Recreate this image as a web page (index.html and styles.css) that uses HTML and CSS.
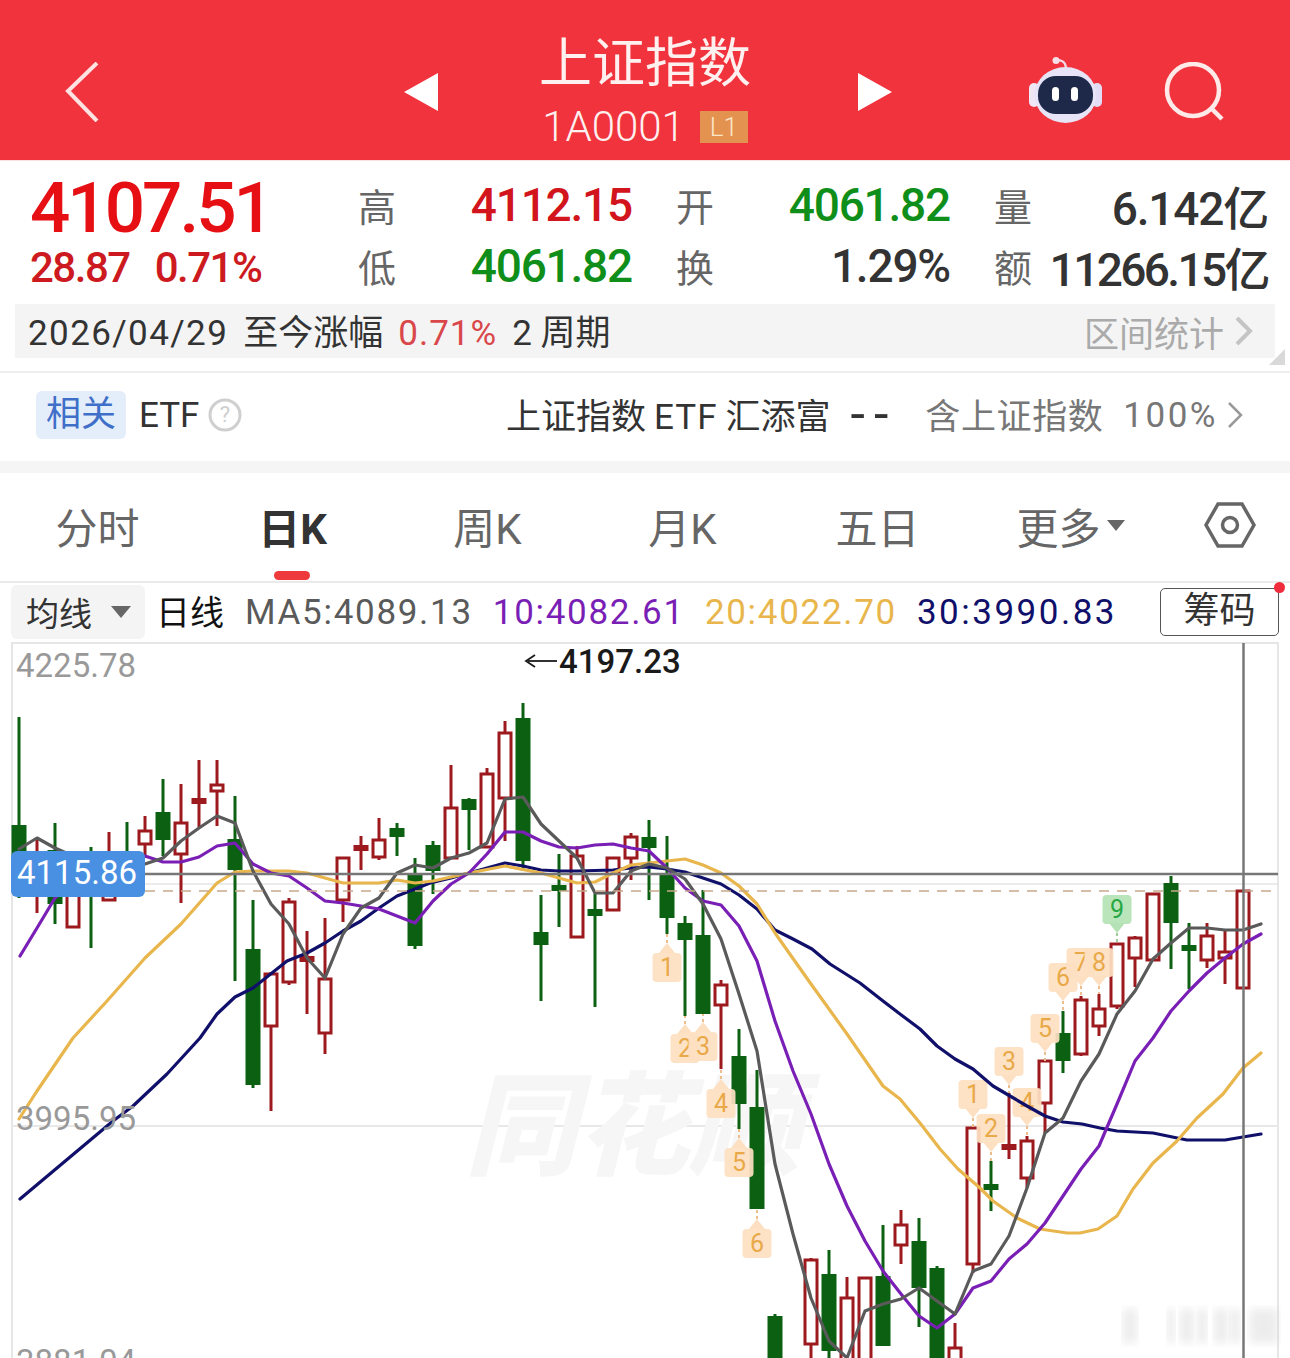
FILE: index.html
```html
<!DOCTYPE html>
<html lang="zh-CN">
<head>
    <meta charset="UTF-8">
    <meta name="viewport" content="width=device-width, initial-scale=1.0">
    <title>上证指数</title>
    <link rel="stylesheet" href="styles.css">
</head>
<body>
    <header class="topbar">
        <svg class="back-icon" width="34" height="60" viewBox="0 0 34 60"><polyline points="32,1 3,29 32,59" fill="none" stroke="#ffe3e3" stroke-width="4"/></svg>
        <svg class="prev-icon" width="34" height="38" viewBox="0 0 34 38"><polygon points="34,0 0,19 34,38" fill="#fff"/></svg>
        <div class="title-block">
            <div class="title">上证指数</div>
            <div class="subtitle"><span>1A0001</span><span class="level">L1</span></div>
        </div>
        <svg class="next-icon" width="34" height="38" viewBox="0 0 34 38"><polygon points="0,0 34,19 0,38" fill="#fff"/></svg>
        <svg class="robot-icon" width="74" height="66" viewBox="0 0 74 66">
            <path d="M37 10 C36 4 32 3 27 3" fill="none" stroke="#f3d9e6" stroke-width="2.5"/>
            <circle cx="27" cy="3.5" r="3.5" fill="#f7dfe9"/>
            <rect x="0" y="26" width="10" height="24" rx="5" fill="#efe6f6"/>
            <rect x="63" y="26" width="10" height="24" rx="5" fill="#e3dcf5"/>
            <ellipse cx="36.500" cy="38" rx="31" ry="28" fill="#e8e4f8"/>
            <rect x="9" y="19" width="55" height="38" rx="18" fill="#1e294a"/>
            <rect x="23" y="30" width="7" height="14" rx="3.500" fill="#fff"/>
            <rect x="42" y="30" width="7" height="14" rx="3.500" fill="#fff"/>
        </svg>
        <svg class="search-icon" width="62" height="62" viewBox="0 0 62 62"><circle cx="29" cy="28" r="26" fill="none" stroke="#ffeaea" stroke-width="4.500"/><line x1="48" y1="47" x2="58" y2="57" stroke="#ffeaea" stroke-width="4.500"/></svg>
    </header>

    <section class="quote">
        <div class="quote-main">
            <div class="price">4107.51</div>
            <div class="change"><span>28.87</span><span>0.71%</span></div>
        </div>
        <div class="stats">
            <div class="stat"><span class="stat-name">高</span><span class="stat-value up">4112.15</span></div>
            <div class="stat"><span class="stat-name">开</span><span class="stat-value down">4061.82</span></div>
            <div class="stat"><span class="stat-name">量</span><span class="stat-value">6.142亿</span></div>
            <div class="stat"><span class="stat-name">低</span><span class="stat-value down">4061.82</span></div>
            <div class="stat"><span class="stat-name">换</span><span class="stat-value">1.29%</span></div>
            <div class="stat"><span class="stat-name">额</span><span class="stat-value stat-long">11266.15亿</span></div>
        </div>
    </section>

    <section class="range">
        <div class="range-left"><span class="range-date">2026/04/29</span><span>至今涨幅</span><span class="range-pct">0.71%</span><span>2 周期</span></div>
        <div class="range-right"><span>区间统计</span><svg width="18" height="30" viewBox="0 0 18 30"><polyline points="2,2 15,15 2,28" fill="none" stroke="#c4c4c4" stroke-width="4"/></svg></div>
        <svg class="range-corner" width="16" height="16" viewBox="0 0 16 16"><polygon points="16,0 16,16 0,16" fill="#d9d9d9"/></svg>
    </section>

    <section class="etf">
        <span class="etf-tag">相关</span>
        <span class="etf-name">ETF</span>
        <svg class="help-icon" width="34" height="34" viewBox="0 0 34 34"><circle cx="17" cy="17" r="15" fill="none" stroke="#cfcfcf" stroke-width="3"/><text x="17" y="24" text-anchor="middle" class="help-mark">?</text></svg>
        <span class="etf-fund">上证指数<span class="etf-latin">ETF</span>汇添富</span>
        <span class="etf-dash">--</span>
        <span class="etf-hold">含上证指数</span>
        <span class="etf-pct">100%</span>
        <svg width="16" height="28" viewBox="0 0 16 28"><polyline points="2,2 14,14 2,26" fill="none" stroke="#999" stroke-width="2.500"/></svg>
    </section>

    <nav class="tabs">
        <a class="tab">分时</a>
        <a class="tab tab-active">日K</a>
        <a class="tab">周K</a>
        <a class="tab">月K</a>
        <a class="tab">五日</a>
        <a class="tab tab-more">更多<i class="tab-caret"></i></a>
        <svg class="tab-gear" width="52" height="48" viewBox="0 0 52 48"><polygon points="14,3 38,3 50,24 38,45 14,45 2,24" fill="none" stroke="#666" stroke-width="3.500"/><circle cx="26" cy="24" r="7.500" fill="none" stroke="#666" stroke-width="3.500"/></svg>
    </nav>

    <div class="ma-row">
        <div class="ma-select"><span>均线</span><i class="ma-caret"></i></div>
        <span class="ma-period">日线</span>
        <span class="ma ma5">MA5:4089.13</span>
        <span class="ma ma10">10:4082.61</span>
        <span class="ma ma20">20:4022.70</span>
        <span class="ma ma30">30:3990.83</span>
        <div class="chip-btn">筹码<i class="chip-dot"></i></div>
    </div>

    <div class="chart">
        <svg id="kline" width="1290" height="718" viewBox="0 640 1290 718"></svg>
    </div>
    <script src="chart.js"></script>
</body>
</html>
```

FILE: styles.css
```css
* {
    box-sizing: border-box;
}
html, body {
    margin: 0;
    padding: 0;
}
body {
    width: 1290px;
    height: 1358px;
    overflow: hidden;
    background-color: white;
    color: #333;
    font-family: Roboto, "Noto Sans CJK SC", sans-serif;
}

/* top red bar */
.topbar {
    height: 160px;
    background-color: #f0333c;
    display: flex;
    align-items: flex-start;
    padding: 62px 0 0 65px;
}
.prev-icon {
    margin: 11px 0 0 305px;
}
.title-block {
    width: 212px;
    margin: -30px 0 0 101px;
    color: #fff0f0;
    text-align: center;
}
.title {
    font-size: 53px;
    line-height: 64px;
    white-space: nowrap;
}
.subtitle {
    display: flex;
    align-items: center;
    justify-content: center;
    gap: 15px;
    margin-top: 6px;
    font-size: 42px;
    font-weight: 300;
    line-height: 50px;
    white-space: nowrap;
}
.level {
    width: 48px;
    height: 32px;
    background-color: #e39250;
    color: #fbe6c8;
    font-size: 26px;
    line-height: 32px;
}
.next-icon {
    margin: 11px 0 0 107px;
}
.robot-icon {
    margin: -5px 0 0 137px;
}
.search-icon {
    margin: 0 0 0 61px;
}

/* quote */
.quote {
    height: 144px;
    display: flex;
    border-top: 1px solid #ffe0e2;
}
.quote-main {
    width: 358px;
    padding: 5px 0 0 30px;
    font-weight: 500;
}
.price {
    color: #e60f14;
    font-size: 71px;
    line-height: 84px;
    letter-spacing: -3px;
    white-space: nowrap;
}
.change {
    display: flex;
    gap: 25px;
    margin-top: -2px;
    color: #cc1a20;
    font-size: 42px;
    line-height: 40px;
    letter-spacing: -1.500px;
    white-space: nowrap;
}
.stats {
    display: grid;
    grid-template-columns: repeat(3, 274px);
    grid-auto-rows: 61px;
    column-gap: 44px;
    padding-top: 13px;
}
.stat {
    display: flex;
    align-items: center;
    justify-content: space-between;
}
.stat-name {
    color: #666;
    font-size: 38px;
}
.stat-value {
    font-size: 46px;
    font-weight: 500;
    letter-spacing: -1.200px;
    white-space: nowrap;
}
.stat-long {
    letter-spacing: -2.600px;
}
.up {
    color: #d2141c;
}
.down {
    color: #0f8f1a;
}

/* range bar */
.range {
    position: relative;
    height: 54px;
    margin: 0 15px;
    background-color: #f4f4f4;
    display: flex;
    align-items: center;
    justify-content: space-between;
    padding: 0 22px 0 13px;
    font-size: 35px;
}
.range-left {
    display: flex;
    align-items: baseline;
    gap: 15px;
    margin-top: -4px;
    white-space: nowrap;
}
.range-date {
    letter-spacing: 1.400px;
}
.range-pct {
    color: #d9474a;
    letter-spacing: 1px;
}
.range-right {
    display: flex;
    align-items: center;
    gap: 11px;
    color: #aaa;
}
.range-corner {
    position: absolute;
    right: -10px;
    bottom: -7px;
}

/* etf row */
.etf {
    height: 102px;
    margin-top: 13px;
    padding: 0 47px 4px 36px;
    border-top: 2px solid #eee;
    border-bottom: 12px solid #f5f5f5;
    display: flex;
    align-items: center;
    font-size: 35px;
    white-space: nowrap;
}
.etf-tag {
    width: 90px;
    height: 48px;
    border-radius: 6px;
    background-color: #e4eefb;
    color: #3f6fc8;
    line-height: 48px;
    text-align: center;
}
.etf-name {
    margin-left: 13px;
}
.help-icon {
    margin-left: 9px;
}
.help-mark {
    font-size: 22px;
    fill: #cfcfcf;
}
.etf-fund {
    margin-left: auto;
    padding-bottom: 3px;
}
.etf-latin {
    margin: 0 8px;
    letter-spacing: 1px;
}
.etf-dash {
    margin-left: 20px;
    font-size: 52px;
    line-height: 1;
    letter-spacing: 9px;
}
.etf-hold {
    margin-left: 28px;
    padding-bottom: 3px;
    color: #777;
    letter-spacing: .6px;
}
.etf-pct {
    margin: 0 9px 0 20px;
    color: #777;
    letter-spacing: 2.500px;
}

/* tabs */
.tabs {
    position: relative;
    height: 110px;
    display: grid;
    grid-template-columns: repeat(6, 195px) 120px;
    align-items: center;
    justify-items: center;
    padding-bottom: 4px;
    border-bottom: 2px solid #eaeaea;
}
.tab {
    position: relative;
    color: #666;
    font-size: 42px;
    white-space: nowrap;
}
.tab-active {
    color: #333;
    font-weight: 700;
}
.tab-active::after {
    content: "";
    position: absolute;
    left: 50%;
    margin-left: -18px;
    bottom: -24px;
    width: 36px;
    height: 9px;
    border-radius: 5px;
    background-color: #ee3a3c;
}
.tab-more {
    padding-right: 28px;
}
.tab-caret {
    position: absolute;
    left: 91px;
    top: 25px;
    border-left: 9px solid transparent;
    border-right: 9px solid transparent;
    border-top: 11px solid #666;
}

/* moving average row */
.ma-row {
    height: 58px;
    display: flex;
    align-items: center;
    padding: 0 11px;
    white-space: nowrap;
}
.ma-select {
    width: 134px;
    height: 54px;
    border-radius: 6px;
    background-color: #f4f4f4;
    display: flex;
    align-items: center;
    gap: 19px;
    padding-left: 15px;
    font-size: 33px;
}
.ma-caret {
    border-left: 10px solid transparent;
    border-right: 10px solid transparent;
    border-top: 12px solid #666;
}
.ma-period {
    margin-left: 11px;
    margin-right: 21px;
    padding-bottom: 4px;
    color: #111;
    font-size: 34px;
}
.ma {
    margin-right: 20px;
    font-size: 35px;
    letter-spacing: 1.700px;
}
.ma5 {
    color: #5a5a5a;
}
.ma10 {
    color: #7a1fb5;
}
.ma20 {
    color: #e8b64c;
}
.ma30 {
    color: #10106a;
    letter-spacing: 2.500px;
}
.chip-btn {
    position: relative;
    width: 119px;
    height: 48px;
    margin-left: auto;
    border: 1.500px solid #555;
    border-radius: 5px;
    font-size: 36px;
    line-height: 44px;
    text-align: center;
}
.chip-dot {
    position: absolute;
    top: -7px;
    right: -7px;
    width: 11px;
    height: 11px;
    border-radius: 50%;
    background-color: #f02c3c;
}

/* chart */
.chart {
    height: 718px;
}
#kline {
    display: block;
}
.axis-label {
    fill: #999;
    font-size: 33px;
}
.last-label {
    fill: white;
    font-size: 33px;
}
.peak-label {
    fill: #1a1a1a;
    font-size: 33px;
    font-weight: 500;
}
.watermark {
    fill: #f6f6f6;
    font-size: 112px;
    font-style: italic;
    font-weight: 900;
}
.badge-text {
    font-size: 25px;
    text-anchor: middle;
}
```

FILE: chart.js
```js
// x, high, body top, body bottom, low, type (r = up, g = down, d = up doji, e = down doji)
const candles = [
    [19, 716, 824, 885, 897, 'g'], [37, 837, 860, 880, 912, 'r'], [55, 822, 849, 903, 923, 'g'],
    [73, 870, 870, 926, 926, 'r'], [91, 846, 855, 880, 947, 'g'], [109, 831, 870, 899, 899, 'r'],
    [127, 821, 850, 870, 880, 'g'], [145, 815, 830, 843, 857, 'r'], [163, 778, 811, 839, 855, 'g'],
    [181, 783, 822, 853, 902, 'r'], [199, 759, 797, 803, 826, 'd'], [217, 759, 784, 790, 825, 'r'],
    [235, 795, 838, 869, 980, 'g'], [253, 899, 948, 1084, 1087, 'g'], [271, 971, 973, 1025, 1110, 'r'],
    [289, 897, 901, 981, 984, 'r'], [307, 930, 955, 961, 1013, 'd'], [325, 917, 978, 1032, 1053, 'r'],
    [343, 857, 857, 899, 921, 'r'], [361, 835, 844, 850, 869, 'd'], [379, 817, 839, 856, 859, 'r'],
    [397, 822, 827, 836, 855, 'g'], [415, 857, 873, 945, 948, 'g'], [433, 840, 844, 870, 893, 'g'],
    [451, 764, 807, 857, 857, 'r'], [469, 797, 798, 809, 849, 'g'], [487, 767, 773, 846, 846, 'r'],
    [505, 720, 732, 797, 840, 'r'], [523, 702, 717, 860, 870, 'g'], [541, 894, 931, 944, 1000, 'g'],
    [559, 853, 884, 890, 926, 'g'], [577, 845, 855, 936, 936, 'r'], [595, 893, 908, 915, 1006, 'g'],
    [613, 857, 857, 909, 909, 'r'], [631, 832, 836, 857, 879, 'r'], [649, 819, 836, 847, 899, 'g'],
    [667, 835, 873, 917, 933, 'g'], [685, 915, 922, 939, 1015, 'g'], [703, 889, 934, 1013, 1013, 'g'],
    [721, 979, 984, 1004, 1068, 'r'], [739, 1028, 1055, 1103, 1128, 'g'], [757, 1069, 1106, 1208, 1208, 'g'],
    [775, 1313, 1315, 1400, 1400, 'g'], [811, 1257, 1259, 1343, 1360, 'r'], [829, 1249, 1273, 1350, 1360, 'g'],
    [847, 1276, 1297, 1400, 1400, 'r'], [865, 1276, 1277, 1400, 1400, 'r'], [883, 1224, 1275, 1345, 1345, 'g'],
    [901, 1209, 1224, 1244, 1263, 'r'], [919, 1217, 1240, 1287, 1326, 'g'], [937, 1265, 1267, 1400, 1400, 'g'],
    [955, 1322, 1347, 1400, 1400, 'r'], [973, 1127, 1127, 1263, 1272, 'r'], [991, 1160, 1183, 1189, 1210, 'e'],
    [1009, 1092, 1143, 1149, 1158, 'd'], [1027, 1135, 1140, 1177, 1187, 'r'], [1045, 1060, 1060, 1102, 1132, 'r'],
    [1063, 1010, 1032, 1060, 1072, 'g'], [1081, 995, 999, 1053, 1055, 'r'], [1099, 993, 1008, 1025, 1035, 'r'],
    [1117, 943, 943, 1005, 1008, 'r'], [1135, 935, 937, 957, 986, 'r'], [1153, 893, 893, 959, 959, 'r'],
    [1171, 875, 882, 922, 968, 'g'], [1189, 922, 944, 950, 988, 'e'], [1207, 922, 935, 959, 967, 'r'],
    [1225, 928, 951, 957, 983, 'r'], [1243, 890, 890, 987, 987, 'r']
];

const ma5 = [[19, 848], [37, 837], [55, 847], [73, 855], [91, 860], [109, 862], [127, 863], [145, 863], [163, 857], [181, 840], [199, 827], [217, 815], [235, 822], [253, 870], [271, 903], [289, 923], [307, 957], [325, 977], [343, 933], [361, 907], [379, 897], [397, 872], [415, 864], [433, 867], [451, 857], [469, 852], [487, 842], [505, 798], [523, 796], [541, 823], [559, 840], [577, 857], [595, 892], [613, 892], [631, 870], [649, 863], [667, 867], [685, 878], [703, 903], [721, 938], [739, 993], [757, 1050], [775, 1163], [793, 1233], [811, 1297], [829, 1340], [847, 1357], [865, 1310], [883, 1303], [901, 1298], [919, 1287], [937, 1300], [955, 1313], [973, 1270], [991, 1263], [1009, 1235], [1027, 1187], [1045, 1132], [1063, 1117], [1081, 1080], [1099, 1053], [1117, 1013], [1135, 990], [1153, 958], [1171, 942], [1189, 927], [1207, 927], [1225, 929], [1243, 929], [1261, 923]];
const ma10 = [[20, 955], [37, 927], [55, 897], [73, 880], [91, 870], [109, 862], [127, 858], [145, 855], [163, 861], [181, 861], [199, 856], [217, 845], [235, 842], [253, 863], [271, 872], [289, 875], [307, 887], [325, 900], [343, 902], [361, 905], [379, 908], [397, 915], [415, 922], [433, 900], [451, 883], [469, 872], [487, 853], [505, 831], [523, 831], [541, 840], [559, 846], [577, 847], [595, 844], [613, 843], [631, 847], [649, 850], [667, 867], [685, 887], [703, 900], [721, 904], [739, 925], [757, 960], [775, 1020], [793, 1070], [811, 1113], [829, 1163], [847, 1205], [865, 1240], [883, 1270], [901, 1293], [919, 1315], [937, 1327], [955, 1313], [973, 1287], [991, 1280], [1009, 1258], [1027, 1243], [1045, 1222], [1063, 1195], [1081, 1168], [1099, 1145], [1117, 1103], [1135, 1060], [1153, 1037], [1171, 1010], [1189, 990], [1207, 972], [1225, 957], [1243, 943], [1261, 933]];
const ma20 = [[19, 1118], [37, 1090], [73, 1037], [107, 1000], [145, 957], [181, 923], [217, 882], [235, 871], [253, 870], [289, 870], [307, 872], [325, 877], [343, 882], [361, 882], [379, 882], [397, 879], [415, 882], [433, 880], [469, 872], [505, 865], [541, 872], [577, 882], [595, 881], [613, 872], [631, 864], [649, 862], [685, 858], [703, 864], [721, 872], [739, 885], [757, 903], [775, 932], [811, 983], [847, 1033], [883, 1085], [900, 1098], [920, 1122], [940, 1148], [958, 1168], [980, 1187], [993, 1200], [1017, 1217], [1040, 1228], [1067, 1232], [1080, 1232], [1098, 1228], [1117, 1215], [1133, 1188], [1153, 1162], [1177, 1140], [1197, 1117], [1223, 1093], [1243, 1067], [1261, 1052]];
const ma30 = [[20, 1198], [113, 1120], [133, 1105], [167, 1073], [200, 1037], [217, 1013], [235, 996], [253, 987], [287, 960], [307, 952], [325, 942], [343, 930], [361, 920], [379, 907], [397, 895], [415, 888], [430, 882], [451, 877], [469, 872], [487, 867], [505, 862], [523, 865], [541, 869], [559, 870], [577, 870], [613, 869], [631, 867], [649, 866], [667, 868], [685, 871], [703, 877], [721, 883], [739, 894], [757, 908], [775, 929], [793, 938], [812, 948], [830, 963], [860, 982], [883, 1000], [900, 1013], [920, 1028], [937, 1045], [955, 1058], [973, 1068], [993, 1085], [1010, 1095], [1027, 1105], [1045, 1115], [1063, 1121], [1082, 1123], [1100, 1127], [1117, 1130], [1153, 1132], [1187, 1139], [1225, 1139], [1243, 1136], [1261, 1133]];

// x, box top, number, tag sits above the candle?, stem end
const badges = [
    [667, 952, 1, false, 933], [685, 1033, 2, false, 1015], [703, 1031, 3, false, 1013], [721, 1088, 4, false, 1068],
    [739, 1147, 5, false, 1128], [757, 1228, 6, false, 1208], [973, 1079, 1, true, 1127], [991, 1113, 2, true, 1160],
    [1009, 1046, 3, true, 1092], [1027, 1087, 4, true, 1135], [1045, 1013, 5, true, 1060], [1063, 962, 6, true, 1010],
    [1081, 947, 7, true, 995], [1099, 947, 8, true, 993], [1117, 894, 9, true, 943]
];

const RED = '#9c191e';
const GREEN = '#0b6011';
let svg = '<defs><filter id="soft"><feGaussianBlur stdDeviation="4"/></filter></defs>';

// frame and grid
svg += '<rect x="12" y="642" width="1266" height="730" fill="none" stroke="#e6e6e6" stroke-width="2"/>';
svg += '<line x1="12" y1="1125" x2="1278" y2="1125" stroke="#e8e8e8" stroke-width="2"/>';
svg += '<line x1="12" y1="883" x2="1278" y2="883" stroke="#e4e4e4" stroke-width="1.500"/>';
svg += '<text x="465" y="1165" class="watermark">同花顺</text>';

candles.forEach(function (c) {
    const x = c[0];
    const type = c[5];
    const color = (type === 'r' || type === 'd') ? RED : GREEN;
    svg += `<line x1="${x}" y1="${c[1]}" x2="${x}" y2="${c[4]}" stroke="${color}" stroke-width="3"/>`;
    if (type === 'g' || type === 'd' || type === 'e') {
        svg += `<rect x="${x - 7.5}" y="${c[2]}" width="15" height="${c[3] - c[2]}" fill="${color}"/>`;
    } else {
        svg += `<rect x="${x - 6}" y="${c[2]}" width="12" height="${c[3] - c[2]}" fill="white" stroke="${color}" stroke-width="3"/>`;
    }
});

badges.forEach(function (b) {
    const x = b[0];
    const top = b[1];
    const above = b[3];
    const green = b[2] === 9;
    const fill = green ? '#b5e2b4' : '#fde0c2';
    const tip = above ? top + 38 : top - 10;
    const base = above ? top + 28 : top;
    svg += `<line x1="${x}" y1="${tip}" x2="${x}" y2="${b[4]}" stroke="${green ? '#9ccf9c' : '#eebd8c'}" stroke-width="2" stroke-dasharray="3 3"/>`;
    svg += `<polygon points="${x - 8},${base} ${x + 8},${base} ${x},${tip}" fill="${fill}"/>`;
    svg += `<rect x="${x - 14.5}" y="${top}" width="29" height="29" rx="4" fill="${fill}" fill-opacity=".93"/>`;
    svg += `<text x="${x}" y="${top + 23}" class="badge-text" fill="${green ? '#27a845' : '#e9a948'}">${b[2]}</text>`;
});

// moving averages
[[ma30, '#10106a'], [ma20, '#e8b64c'], [ma10, '#7a1fb5'], [ma5, '#5a5a5a']].forEach(function (m) {
    const pts = m[0].map(function (p) { return p.join(','); }).join(' ');
    svg += `<polyline points="${pts}" fill="none" stroke="${m[1]}" stroke-width="3.2" stroke-linejoin="round" stroke-linecap="round"/>`;
});

// last price lines and crosshair
svg += '<line x1="145" y1="890" x2="1278" y2="890" stroke="#c8a98c" stroke-width="1.500" stroke-dasharray="10 8"/>';
svg += '<line x1="145" y1="873" x2="1278" y2="873" stroke="#777" stroke-width="2.500"/>';
svg += '<line x1="1243.500" y1="642" x2="1243.500" y2="1358" stroke="#777" stroke-width="2.500"/>';

// blurred scrap in the corner of the picture
[[1123, 14], [1167, 8], [1180, 14], [1197, 10], [1214, 14], [1230, 10], [1250, 28]].forEach(function (s) {
    svg += `<rect x="${s[0]}" y="1308" width="${s[1]}" height="34" fill="#cfcfcf" fill-opacity=".4" filter="url(#soft)"/>`;
});

// price labels
svg += '<text x="16" y="676" class="axis-label">4225.78</text>';
svg += '<text x="16" y="1129" class="axis-label">3995.95</text>';
svg += '<text x="16" y="1372" class="axis-label">3881.04</text>';
svg += '<line x1="528" y1="660" x2="557" y2="660" stroke="#1a1a1a" stroke-width="1.800"/>';
svg += '<polyline points="535,654 526,660 535,666" fill="none" stroke="#1a1a1a" stroke-width="1.800"/>';
svg += '<text x="559" y="672" class="peak-label">4197.23</text>';
svg += '<rect x="11" y="850" width="134" height="46" rx="6" fill="#4a90e2"/>';
svg += '<text x="17" y="883" class="last-label">4115.86</text>';

document.getElementById('kline').innerHTML = svg;
```
